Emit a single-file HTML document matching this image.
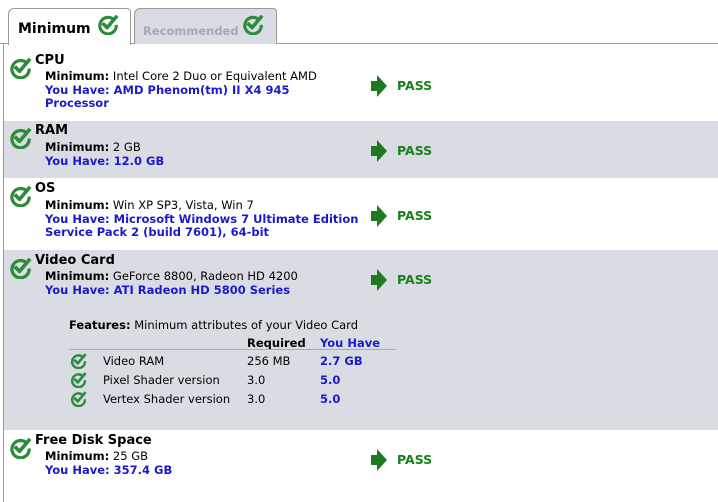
<!DOCTYPE html>
<html><head><meta charset="utf-8"><style>
*{margin:0;padding:0;box-sizing:border-box}
body{width:718px;height:502px;background:#fff;font-family:"DejaVu Sans",Verdana,"Liberation Sans",sans-serif;font-size:11.5px;color:#000;position:relative;overflow:hidden}
.a{position:absolute;white-space:nowrap}
.row{position:absolute;left:4px;right:0}
.g{background:#d9dce3}
.t{font-size:13px;font-weight:bold}
.b{font-weight:bold}
.blue{color:#1a1acc;font-weight:bold}
.pass{color:#1a7f1a;font-weight:bold;font-size:12.5px}
</style></head><body>
<svg width="0" height="0" style="position:absolute"><defs>
<symbol id="ck" viewBox="0 0 24 24"><path d="M18.5 7.5A9 9 0 1 0 21 13" fill="none" stroke="#2e8b3a" stroke-width="3.4"/><path d="M6 11l5 5L22 3" fill="none" stroke="#2e8b3a" stroke-width="3.8" stroke-linejoin="round"/></symbol>
<symbol id="ar" viewBox="0 0 16 22"><path d="M0 6h6V0l10 11-10 11v-6H0z" fill="#1f7a1f"/></symbol>
</defs></svg>

<div class="a" style="left:8px;top:8px;width:123px;height:37px;background:#fff;border:1px solid #999;border-bottom:none;border-radius:6px 4px 0 0"></div>
<div class="a" style="left:134px;top:8px;width:143px;height:36px;background:#d9dce3;border:1px solid #999;border-bottom:none;border-radius:6px 4px 0 0"></div>
<div class="a" style="left:0;top:43px;width:8px;height:1px;background:#999"></div>
<div class="a" style="left:131px;top:43px;width:3px;height:1px;background:#999"></div>
<div class="a" style="left:277px;top:43px;width:441px;height:1px;background:#999"></div>
<div class="a" style="left:3px;top:44px;width:1px;height:458px;background:#999"></div>
<div class="a" style="left:18px;top:21px;font-size:14px;font-weight:bold">Minimum</div>
<svg class="a" style="left:97px;top:13px" width="22" height="22"><use href="#ck"/></svg>
<div class="a" style="left:143px;top:24px;font-size:11.5px;font-weight:bold;color:#a4a7ad">Recommended</div>
<svg class="a" style="left:242px;top:13px" width="22" height="22"><use href="#ck"/></svg>

<div class="row g" style="top:121px;height:57px"></div>
<div class="row g" style="top:250px;height:180px"></div>

<svg class="a" style="left:9px;top:56px" width="23" height="23"><use href="#ck"/></svg>
<div class="a t" style="left:35px;top:53px">CPU</div>
<div class="a" style="left:45px;top:69px"><span class="b">Minimum:</span> Intel Core 2 Duo or Equivalent AMD</div>
<div class="a blue" style="left:45px;top:83px">You Have: AMD Phenom(tm) II X4 945</div>
<div class="a blue" style="left:45px;top:96px">Processor</div>
<svg class="a" style="left:371px;top:75px" width="16" height="22"><use href="#ar"/></svg>
<div class="a pass" style="left:397px;top:78px">PASS</div>

<svg class="a" style="left:9px;top:126px" width="23" height="23"><use href="#ck"/></svg>
<div class="a t" style="left:35px;top:123px">RAM</div>
<div class="a" style="left:45px;top:140px"><span class="b">Minimum:</span> 2 GB</div>
<div class="a blue" style="left:45px;top:154px">You Have: 12.0 GB</div>
<svg class="a" style="left:371px;top:140px" width="16" height="22"><use href="#ar"/></svg>
<div class="a pass" style="left:397px;top:143px">PASS</div>

<svg class="a" style="left:9px;top:184px" width="23" height="23"><use href="#ck"/></svg>
<div class="a t" style="left:35px;top:181px">OS</div>
<div class="a" style="left:45px;top:198px"><span class="b">Minimum:</span> Win XP SP3, Vista, Win 7</div>
<div class="a blue" style="left:45px;top:212px">You Have: Microsoft Windows 7 Ultimate Edition</div>
<div class="a blue" style="left:45px;top:225px">Service Pack 2 (build 7601), 64-bit</div>
<svg class="a" style="left:371px;top:205px" width="16" height="22"><use href="#ar"/></svg>
<div class="a pass" style="left:397px;top:208px">PASS</div>

<svg class="a" style="left:9px;top:256px" width="23" height="23"><use href="#ck"/></svg>
<div class="a t" style="left:35px;top:253px">Video Card</div>
<div class="a" style="left:45px;top:269px"><span class="b">Minimum:</span> GeForce 8800, Radeon HD 4200</div>
<div class="a blue" style="left:45px;top:283px">You Have: ATI Radeon HD 5800 Series</div>
<svg class="a" style="left:371px;top:269px" width="16" height="22"><use href="#ar"/></svg>
<div class="a pass" style="left:397px;top:272px">PASS</div>

<div class="a" style="left:69px;top:318px"><span class="b">Features:</span> Minimum attributes of your Video Card</div>
<div class="a b" style="left:247px;top:336px">Required</div>
<div class="a blue" style="left:320px;top:336px">You Have</div>
<div class="a" style="left:69px;top:349px;width:327px;height:1px;background:#a8abb0"></div>
<svg class="a" style="left:70px;top:352px" width="17" height="17"><use href="#ck"/></svg>
<div class="a" style="left:103px;top:354px">Video RAM</div>
<div class="a" style="left:247px;top:354px">256 MB</div>
<div class="a blue" style="left:320px;top:354px">2.7 GB</div>
<svg class="a" style="left:70px;top:371px" width="17" height="17"><use href="#ck"/></svg>
<div class="a" style="left:103px;top:373px">Pixel Shader version</div>
<div class="a" style="left:247px;top:373px">3.0</div>
<div class="a blue" style="left:320px;top:373px">5.0</div>
<svg class="a" style="left:70px;top:390px" width="17" height="17"><use href="#ck"/></svg>
<div class="a" style="left:103px;top:392px">Vertex Shader version</div>
<div class="a" style="left:247px;top:392px">3.0</div>
<div class="a blue" style="left:320px;top:392px">5.0</div>

<svg class="a" style="left:9px;top:436px" width="23" height="23"><use href="#ck"/></svg>
<div class="a t" style="left:35px;top:433px">Free Disk Space</div>
<div class="a" style="left:45px;top:449px"><span class="b">Minimum:</span> 25 GB</div>
<div class="a blue" style="left:45px;top:463px">You Have: 357.4 GB</div>
<svg class="a" style="left:371px;top:449px" width="16" height="22"><use href="#ar"/></svg>
<div class="a pass" style="left:397px;top:452px">PASS</div>
</body></html>
